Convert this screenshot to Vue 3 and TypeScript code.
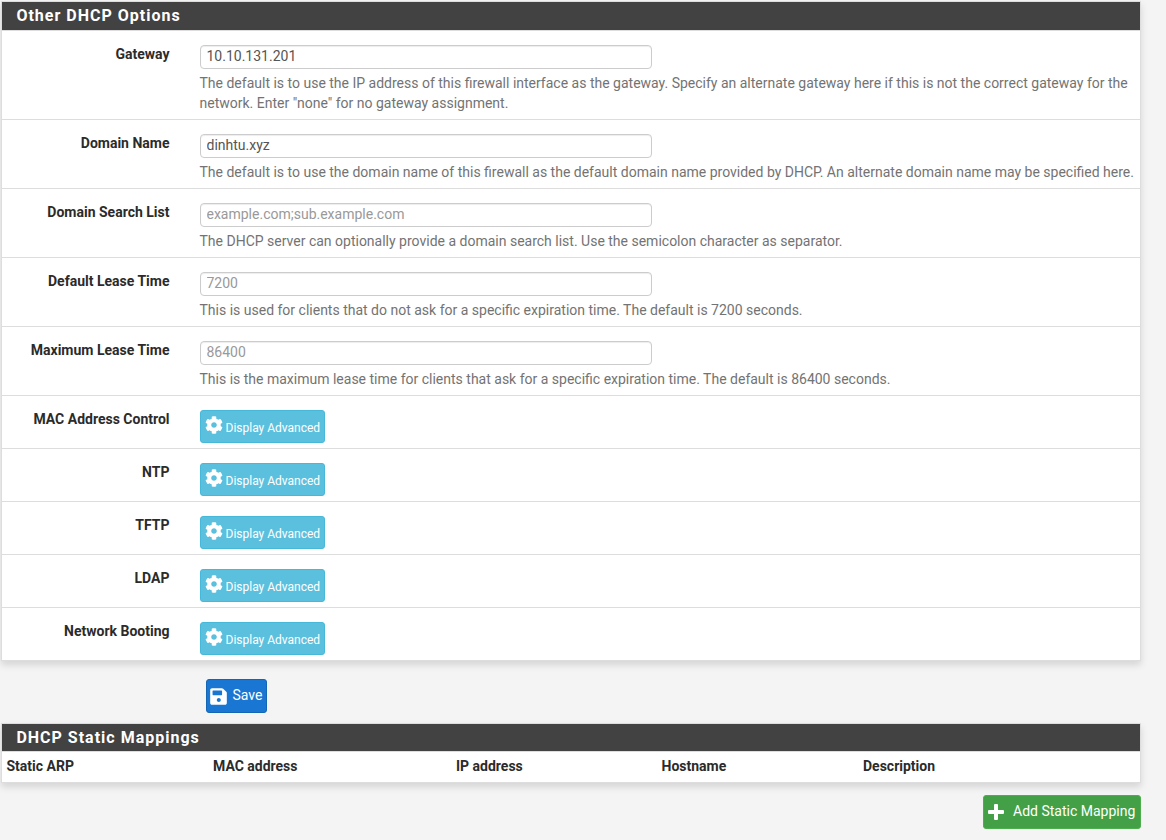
<script setup lang="ts">
interface Field {
  label: string
  value?: string
  placeholder?: string
  help: string
}

const fields: Field[] = [
  {
    label: 'Gateway',
    value: '10.10.131.201',
    help: 'The default is to use the IP address of this firewall interface as the gateway. Specify an alternate gateway here if this is not the correct gateway for the network. Enter "none" for no gateway assignment.',
  },
  {
    label: 'Domain Name',
    value: 'dinhtu.xyz',
    help: 'The default is to use the domain name of this firewall as the default domain name provided by DHCP. An alternate domain name may be specified here.',
  },
  {
    label: 'Domain Search List',
    placeholder: 'example.com;sub.example.com',
    help: 'The DHCP server can optionally provide a domain search list. Use the semicolon character as separator.',
  },
  {
    label: 'Default Lease Time',
    placeholder: '7200',
    help: 'This is used for clients that do not ask for a specific expiration time. The default is 7200 seconds.',
  },
  {
    label: 'Maximum Lease Time',
    placeholder: '86400',
    help: 'This is the maximum lease time for clients that ask for a specific expiration time. The default is 86400 seconds.',
  },
]

const advanced: string[] = ['MAC Address Control', 'NTP', 'TFTP', 'LDAP', 'Network Booting']
const columns: string[] = ['Static ARP', 'MAC address', 'IP address', 'Hostname', 'Description']
</script>

<template>
  <main class="page">
    <section class="panel">
      <h2 class="panel-title">Other DHCP Options</h2>
      <div v-for="f in fields" :key="f.label" class="row">
        <label class="label">{{ f.label }}</label>
        <div class="control">
          <input class="input" type="text" :value="f.value" :placeholder="f.placeholder" />
          <p class="help">{{ f.help }}</p>
        </div>
      </div>
      <div v-for="name in advanced" :key="name" class="row">
        <label class="label">{{ name }}</label>
        <div class="control">
          <button class="btn btn-info" type="button">
            <svg class="gear" viewBox="0 0 512 512">
              <path
                fill="currentColor"
                d="M487.400 315.700l-42.600-24.600c4.300-23.200 4.300-47 0-70.200l42.600-24.600c4.900-2.800 7.100-8.600 5.500-14-11.100-35.600-30-67.800-54.700-94.600-3.800-4.100-10-5.100-14.800-2.300L380.800 110c-17.900-15.400-38.500-27.300-60.800-35.100V25.800c0-5.600-3.900-10.500-9.400-11.700-36.700-8.200-74.300-7.800-109.200 0-5.500 1.200-9.400 6.100-9.400 11.700V75c-22.200 7.900-42.800 19.800-60.800 35.100L88.700 85.500c-4.900-2.800-11-1.900-14.800 2.300-24.700 26.700-43.600 58.900-54.700 94.600-1.700 5.400.6 11.200 5.500 14L67.300 221c-4.300 23.200-4.300 47 0 70.200l-42.600 24.600c-4.900 2.800-7.100 8.600-5.500 14 11.100 35.600 30 67.800 54.700 94.600 3.800 4.100 10 5.100 14.800 2.300l42.600-24.600c17.900 15.400 38.500 27.300 60.800 35.100v49.200c0 5.600 3.900 10.500 9.400 11.700 36.700 8.200 74.300 7.800 109.200 0 5.500-1.200 9.400-6.100 9.400-11.700v-49.200c22.200-7.900 42.800-19.800 60.800-35.100l42.600 24.600c4.900 2.800 11 1.900 14.800-2.300 24.700-26.700 43.600-58.900 54.700-94.600 1.500-5.500-.7-11.300-5.600-14.100zM256 336c-44.100 0-80-35.900-80-80s35.900-80 80-80 80 35.900 80 80-35.900 80-80 80z"
              />
            </svg>
            <span>Display Advanced</span>
          </button>
        </div>
      </div>
    </section>

    <div class="save-bar">
      <button class="btn btn-primary" type="button">
        <svg class="disk" viewBox="0 0 448 512">
          <path
            fill="currentColor"
            fill-rule="evenodd"
            d="M433.900 129.900l-83.900-83.900A48 48 0 0 0 316.100 32H48C21.500 32 0 53.500 0 80v352c0 26.500 21.500 48 48 48h352c26.500 0 48-21.500 48-48V163.900a48 48 0 0 0-14.100-34zM232 404c-29.800 0-54-24.200-54-54s24.200-54 54-54 54 24.200 54 54-24.200 54-54 54zm88-292.500V212c0 6.600-5.400 12-12 12H76c-6.600 0-12-5.400-12-12V108c0-6.600 5.400-12 12-12h228.500c3.200 0 6.200 1.300 8.500 3.500l3.500 3.500a12 12 0 0 1 3.500 8.500z"
          />
        </svg>
        <span>Save</span>
      </button>
    </div>

    <section class="panel mappings">
      <h2 class="panel-title">DHCP Static Mappings</h2>
      <div class="columns">
        <span v-for="c in columns" :key="c">{{ c }}</span>
      </div>
    </section>

    <div class="add-bar">
      <button class="btn btn-success" type="button">
        <svg class="plus" viewBox="0 0 16 16">
          <path
            fill="currentColor"
            d="M7 0h2q1 0 1 1v5h5q1 0 1 1v2q0 1-1 1h-5v5q0 1-1 1H7q-1 0-1-1v-5H1q-1 0-1-1V7q0-1 1-1h5V1q0-1 1-1z"
          />
        </svg>
        <span>Add Static Mapping</span>
      </button>
    </div>
  </main>
</template>

<style>
body {
  margin: 0;
  background: #f4f4f4;
}
</style>

<style scoped>
.page {
  box-sizing: border-box;
  width: 1166px;
  height: 840px;
  overflow: hidden;
  padding: 1px 25px 0 1px;
  font: 14px/20px Roboto, sans-serif;
  color: #2b2b2b;
}
.panel {
  background: #fff;
  border: 1px solid #ddd;
  box-shadow: 0 4px 7px rgba(0, 0, 0, 0.13);
}
.panel-title {
  box-sizing: border-box;
  height: 29px;
  margin: 0;
  padding-left: 14.400px;
  border-bottom: 1px solid #ddd;
  background: #424242;
  color: #fff;
  font-size: 16px;
  font-weight: 700;
  line-height: 28px;
  letter-spacing: 1px;
}
.row {
  display: flex;
  padding: 14px 5px 6px 0;
  border-bottom: 1px solid #ddd;
}
.row:has(.btn) {
  padding-bottom: 5px;
}
.row:last-child {
  border-bottom: 0;
}
.label {
  width: 167.500px;
  margin: -1px 30.500px 0 0;
  text-align: right;
  font-weight: 700;
}
.control {
  flex: 1;
  min-width: 0;
}
.input {
  display: block;
  box-sizing: border-box;
  width: 452px;
  height: 24px;
  padding: 0 5.500px 2px;
  border: 1px solid #ccc;
  border-radius: 4px;
  background: #fff;
  box-shadow: inset 0 1px 1px rgba(0, 0, 0, 0.075);
  font: 14px/20px Roboto, sans-serif;
  color: #555;
}
.input::placeholder {
  color: #999;
  opacity: 1;
}
.help {
  margin: 4px 0 0 -0.500px;
  color: #737373;
}
.btn {
  display: flex;
  align-items: center;
  box-sizing: border-box;
  padding: 0 4px;
  border: 1px solid;
  border-radius: 3px;
  color: #fff;
  font: 14px/20px Roboto, sans-serif;
  white-space: nowrap;
}
.btn svg {
  flex: none;
}
.btn-info {
  width: 125px;
  height: 33px;
  background: #5bc0de;
  border-color: #46b8da;
  font-size: 12px;
}
.btn-info span {
  margin: 2px 0 0 3px;
}
.gear {
  width: 18px;
  height: 18px;
  margin: -3px 0 0 -0.500px;
}
.save-bar {
  padding: 18px 0 10px 205px;
}
.btn-primary {
  width: 61px;
  height: 34px;
  padding: 0 3px;
  background: #1976d2;
  border-color: #1565b5;
}
.disk {
  width: 17px;
  height: 19px;
}
.btn-primary span {
  margin: -2px 0 0 5.500px;
}
.mappings .panel-title {
  height: 28px;
  line-height: 28px;
}
.columns {
  display: grid;
  grid-template-columns: 206.500px 243px 205.500px 201.500px 1fr;
  height: 30px;
  padding-left: 4.500px;
  font-weight: 700;
  line-height: 29px;
}
.add-bar {
  display: flex;
  justify-content: flex-end;
  padding-top: 12px;
}
.btn-success {
  width: 158px;
  height: 34px;
  background: #43a047;
  border-color: #4cae4c;
}
.plus {
  width: 16px;
  height: 16px;
}
.btn-success span {
  margin: -2px 0 0 9px;
}
</style>
